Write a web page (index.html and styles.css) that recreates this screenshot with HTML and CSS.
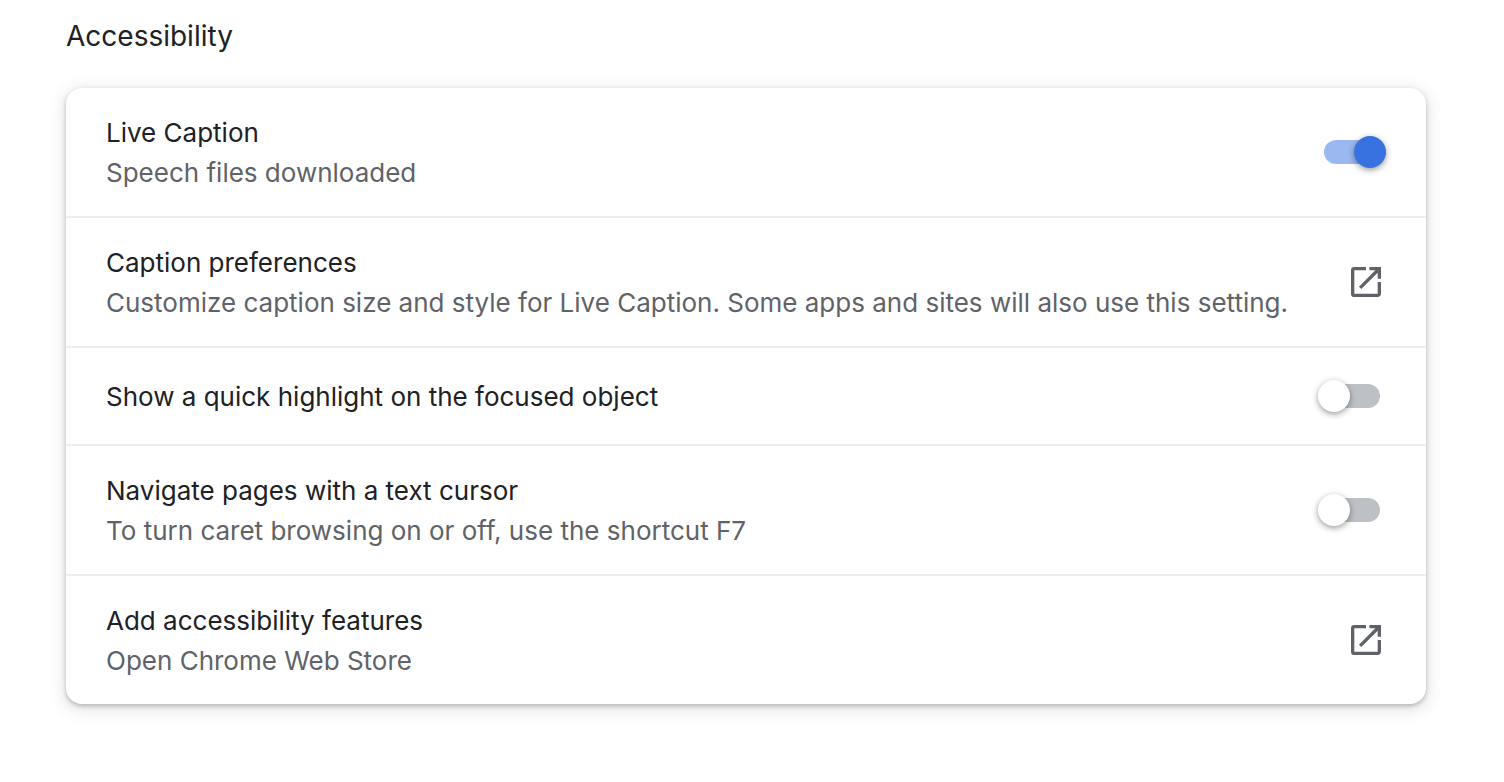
FILE: index.html
```html
<!DOCTYPE html>
<html lang="en">
<head>
  <meta charset="UTF-8">
  <meta name="viewport" content="width=device-width, initial-scale=1.0">
  <title>Accessibility</title>
  <link rel="stylesheet" href="styles.css">
</head>
<body>
  <main class="section">
    <h2 class="title">Accessibility</h2>
    <div class="card">
      <div class="row">
        <label class="text" for="liveCaption">
          <span class="label">Live Caption</span>
          <span class="sub">Speech files downloaded</span>
        </label>
        <input class="toggle" type="checkbox" id="liveCaption" checked>
      </div>
      <a class="row" href="#captions">
        <span class="text">
          <span class="label">Caption preferences</span>
          <span class="sub">Customize caption size and style for Live Caption. Some apps and sites will also use this setting.</span>
        </span>
        <svg class="icon" viewBox="0 0 24 24" aria-hidden="true">
          <path d="M19 19H5V5h7V3H5a2 2 0 0 0-2 2v14a2 2 0 0 0 2 2h14c1.100 0 2-.9 2-2v-7h-2v7zM14 3v2h3.590l-9.830 9.830 1.410 1.410L19 6.410V10h2V3h-7z"/>
        </svg>
      </a>
      <div class="row single">
        <label class="text" for="focusHighlight">
          <span class="label">Show a quick highlight on the focused object</span>
        </label>
        <input class="toggle" type="checkbox" id="focusHighlight">
      </div>
      <div class="row">
        <label class="text" for="caretBrowsing">
          <span class="label">Navigate pages with a text cursor</span>
          <span class="sub">To turn caret browsing on or off, use the shortcut F7</span>
        </label>
        <input class="toggle" type="checkbox" id="caretBrowsing">
      </div>
      <a class="row" href="#store">
        <span class="text">
          <span class="label">Add accessibility features</span>
          <span class="sub">Open Chrome Web Store</span>
        </span>
        <svg class="icon" viewBox="0 0 24 24" aria-hidden="true">
          <path d="M19 19H5V5h7V3H5a2 2 0 0 0-2 2v14a2 2 0 0 0 2 2h14c1.100 0 2-.9 2-2v-7h-2v7zM14 3v2h3.590l-9.830 9.830 1.410 1.410L19 6.410V10h2V3h-7z"/>
        </svg>
      </a>
    </div>
  </main>
</body>
</html>
```

FILE: styles.css
```css
* {
  box-sizing: border-box;
}
body {
  margin: 0;
  background: #fff;
  color: #202124;
  font-family: Inter, "Liberation Sans", sans-serif;
  font-size: 26px;
  line-height: 40px;
}
.section {
  padding: 16px 78px 78px 66px;
}
.title {
  margin: 0 0 32px;
  font-size: 28px;
  font-weight: 400;
}
.card {
  border-radius: 16px;
  background: #fff;
  box-shadow: 0 2px 4px rgba(60, 64, 67, .3), 0 4px 16px 2px rgba(60, 64, 67, .15);
}
.row {
  display: flex;
  align-items: center;
  justify-content: space-between;
  min-height: 128px;
  padding: 0 40px;
  color: inherit;
  text-decoration: none;
}
.row + .row {
  min-height: 130px;
  border-top: 2px solid #eee;
}
.row.single,
.row.single:nth-child(n) {
  min-height: 98px;
}
.text {
  flex: 1;
  padding-top: 2px;
}
.label,
.sub {
  display: block;
}
.sub {
  color: #5f6368;
}
.icon {
  width: 40px;
  height: 40px;
  fill: #5f6368;
}

/* toggle: the input is the bar, ::before is the knob */
.toggle {
  display: flex;
  align-items: center;
  appearance: none;
  width: 56px;
  height: 24px;
  margin: 0 6px 0 0;
  border-radius: 12px;
  background: #bdc1c6;
}
.toggle::before {
  content: "";
  width: 32px;
  height: 32px;
  flex: none;
  margin-left: -6px;
  border-radius: 50%;
  background: #fff;
  box-shadow: 0 2px 6px rgba(0, 0, 0, .4);
}
.toggle:checked {
  background: #9bb9f0;
}
.toggle:checked::before {
  margin-left: 30px;
  background: #3871e0;
}
```
